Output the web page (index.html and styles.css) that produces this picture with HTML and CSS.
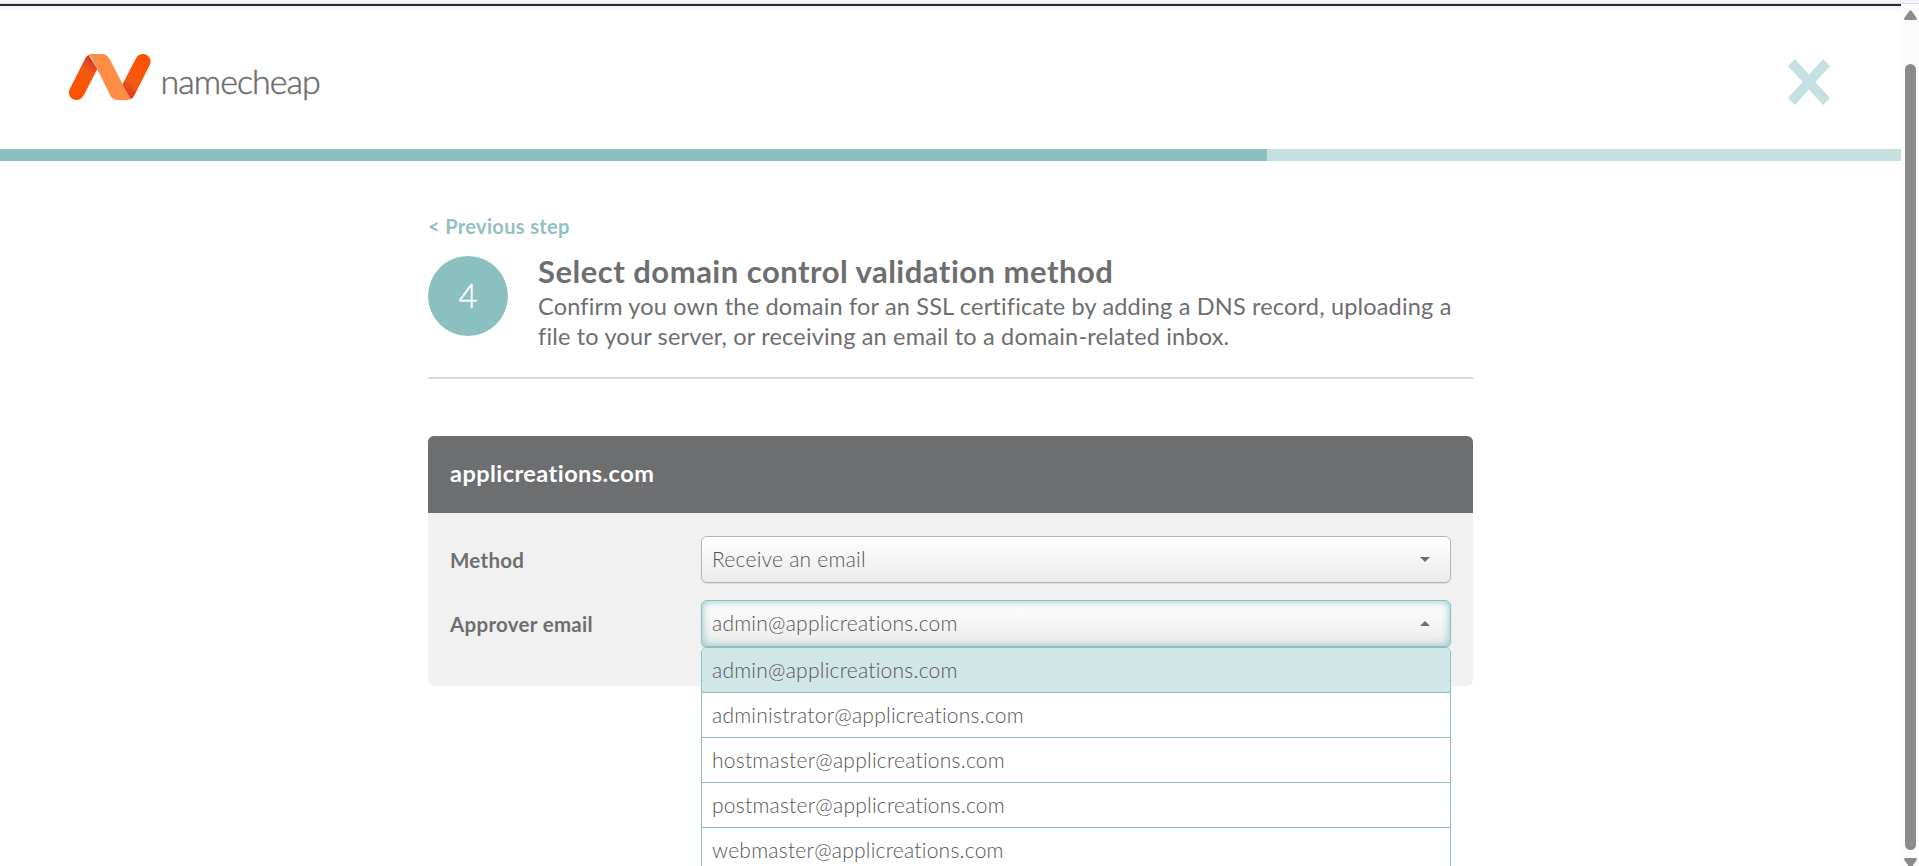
FILE: index.html
```html
<!DOCTYPE html>
<html lang="en">
<head>
<meta charset="utf-8">
<title>Namecheap - Select domain control validation method</title>
<link rel="stylesheet" href="styles.css">
</head>
<body>
<div class="window">
  <div class="page">
    <div class="top-edge"></div>
    <header class="header">
      <a class="brand">
        <svg class="brand-mark" width="81.500" height="46" viewBox="0 0 82 46" preserveAspectRatio="none">
          <defs>
            <linearGradient id="left" x1="0.85" y1="0" x2="0.3" y2="1">
              <stop offset="0" stop-color="#d32b2a"/>
              <stop offset="0.35" stop-color="#f05a14"/>
              <stop offset="0.8" stop-color="#ff5200"/>
            </linearGradient>
            <linearGradient id="right" x1="0.15" y1="1" x2="0.7" y2="0">
              <stop offset="0" stop-color="#d32b2a"/>
              <stop offset="0.35" stop-color="#f05a14"/>
              <stop offset="0.8" stop-color="#ff5200"/>
            </linearGradient>
          </defs>
          <path fill="url(#left)" d="M20 1 L28.500 15 L15 41 Q12 46 7.500 46 A7.500 7.500 0 0 1 .8 35 L16 5 Q17.500 1.500 20 1Z"/>
          <path fill="url(#right)" d="M62 45 L53.500 31 L67 5 Q69.500 0 74.500 0 A7.500 7.500 0 0 1 81.200 11 L66 41 Q64.500 44.500 62 45Z"/>
          <path fill="#ff8c44" d="M19.500 1 Q21 0 24 0 H33 Q38 0 40.500 4.500 L61.500 44.500 L62.500 45 Q61 46 58 46 H49 Q44 46 41.500 41.500 L23 4 Q21.500 1.500 19.500 1Z"/>
        </svg>
        <span class="brand-name">namecheap</span>
      </a>
      <svg class="close" width="42" height="46" viewBox="0 0 43 46" preserveAspectRatio="none">
        <path fill="#c5e0e0" d="M7 0 L21.500 15.500 L36 0 L43 7 L28 23 L43 39 L36 46 L21.500 30.500 L7 46 L0 39 L15 23 L0 7Z"/>
      </svg>
    </header>
    <div class="progress"><div class="progress-value"></div></div>
    <main class="content">
      <a class="previous">&lt; Previous step</a>
      <section class="step">
        <div class="step-number">4</div>
        <div class="step-text">
          <h1 class="title">Select domain control validation method</h1>
          <p class="description"><span>Confirm you own the domain for an SSL certificate by adding a DNS record, uploading a</span><br><span>file to your server, or receiving an email to a domain-related inbox.</span></p>
        </div>
      </section>
      <section class="panel">
        <h2 class="panel-title">applicreations.com</h2>
        <div class="panel-body">
          <div class="field">
            <label class="label">Method</label>
            <div class="select"><span>Receive an email</span><i class="arrow down"></i></div>
          </div>
          <div class="field">
            <label class="label">Approver email</label>
            <div class="select open"><span>admin@applicreations.com</span><i class="arrow up"></i>
              <ul class="options">
                <li class="option selected">admin@applicreations.com</li>
                <li class="option">administrator@applicreations.com</li>
                <li class="option">hostmaster@applicreations.com</li>
                <li class="option">postmaster@applicreations.com</li>
                <li class="option">webmaster@applicreations.com</li>
              </ul>
            </div>
          </div>
        </div>
      </section>
    </main>
  </div>
  <div class="scrollbar">
    <svg width="13" height="10" viewBox="0 0 13 10"><path fill="#8b8b8b" d="M5.500 .7 Q6.500 -.4 7.500 .7 L12.700 8 Q13.300 10 11.500 10 H1.500 Q-.3 10 .3 8Z"/></svg>
    <div class="thumb"></div>
    <svg width="13" height="10" viewBox="0 0 13 10"><path fill="#8b8b8b" d="M5.500 9.300 Q6.500 10.400 7.500 9.300 L12.700 2 Q13.300 0 11.500 0 H1.500 Q-.3 0 .3 2Z"/></svg>
  </div>
</div>
</body>
</html>
```
FILE: styles.css
```css
* { box-sizing: border-box; }
html, body { margin: 0; height: 100%; overflow: hidden; }
body { background: #fff; color: #6d6e70; font-family: Lato, "Open Sans", sans-serif; }
h1, h2, p, ul { margin: 0; padding: 0; }
span { white-space: nowrap; }
.window { display: grid; grid-template-columns: 1901px 18px; height: 866px; overflow: hidden; border-top: 3px solid #f1f5fb; }
.page { height: 863px; overflow: hidden; }
.top-edge { height: 9px; border-top: 1px solid #d5dde8; background: linear-gradient(#2a2831 0 2px, #f6f2f5 2px, #fff); }
.header { height: 137px; display: flex; justify-content: space-between; align-items: flex-start; padding: 42px 71px 0 69px; }
.brand { display: flex; }
.brand-name { margin-left: 10px; margin-top: 7px; font-size: 34px; line-height: 40px; font-weight: 300; letter-spacing: -0.95px; -webkit-text-stroke: 0.5px #6d6e70; }
.close { margin-top: 5px; }
.progress { height: 12px; background: #c5e0e0; }
.progress-value { width: 1267px; height: 12px; background: #8bc0c0; }
.content { width: 1045px; margin-left: 428px; padding-top: 53px; }
.previous { display: block; height: 42px; font-size: 20px; line-height: 25px; font-weight: 700; color: #93c0c0; letter-spacing: 0.35px; }
.step { display: flex; height: 123px; border-bottom: 2px solid #d9d9da; }
.step-number { width: 80px; height: 80px; border-radius: 50%; background: #8bc0c0; color: #fff; font-size: 33px; line-height: 79px; text-align: center; font-weight: 300; -webkit-text-stroke: 0.4px #fff; }
.step-text { margin-left: 30px; }
.title { font-size: 31px; line-height: 30px; font-weight: 700; white-space: nowrap; letter-spacing: 0.5px; }
.description { font-size: 23.500px; line-height: 30px; font-weight: 400; margin-top: 5px; letter-spacing: 0.18px; }
.panel { margin-top: 57px; height: 250px; border-radius: 6px; background: #f1f1f1; }
.panel-title { height: 77px; padding-left: 22px; border-radius: 6px 6px 0 0; background: #6d6e70; color: #fff; font-size: 23.500px; line-height: 74px; font-weight: 700; letter-spacing: 0.45px; }
.panel-body { display: flex; flex-direction: column; gap: 17px; padding: 23px 22px 0; }
.field { display: flex; height: 47px; }
.label { width: 251px; font-size: 20.500px; line-height: 48px; font-weight: 700; letter-spacing: 0.3px; }
.select { position: relative; width: 750px; height: 47px; display: flex; justify-content: space-between; padding: 0 20px 0 10px; border: 1px solid #b4b5b6; border-radius: 6px; background: linear-gradient(#fff, #ebebeb); box-shadow: 0 1px 1px #dcdcdc; font-size: 21px; line-height: 43px; font-weight: 300; letter-spacing: 0.24px; color: #55565a; }
.open { border-color: #8bc0c0; box-shadow: inset 0 0 8px #8bc0c0, 0 1px 1px #8bc0c0; }
.arrow { width: 10px; height: 5px; margin-top: 20px; background: #6d6e70; }
.down { clip-path: polygon(0 0, 100% 0, 50% 100%); }
.up { clip-path: polygon(0 100%, 100% 100%, 50% 0); }
.options { position: absolute; top: 46px; left: -1px; width: 750px; list-style: none; border: 1px solid #8bc0c0; border-radius: 6px 6px 0 0; background: #fff; overflow: hidden; }
.option { height: 45px; padding-left: 10px; border-bottom: 1px solid #8bc0c0; line-height: 43px; }
.selected { background: #d1e6e7; }
.scrollbar { display: flex; flex-direction: column; align-items: center; padding: 6px 0 0 1px; background: #fcfcfc; border-top: 1px solid #d5dde8; }
.thumb { width: 11px; height: 786px; margin: 44px 0 8px; border-radius: 6px; background: #8b8b8b; flex-shrink: 0; }
.scrollbar svg { flex-shrink: 0; }
```
